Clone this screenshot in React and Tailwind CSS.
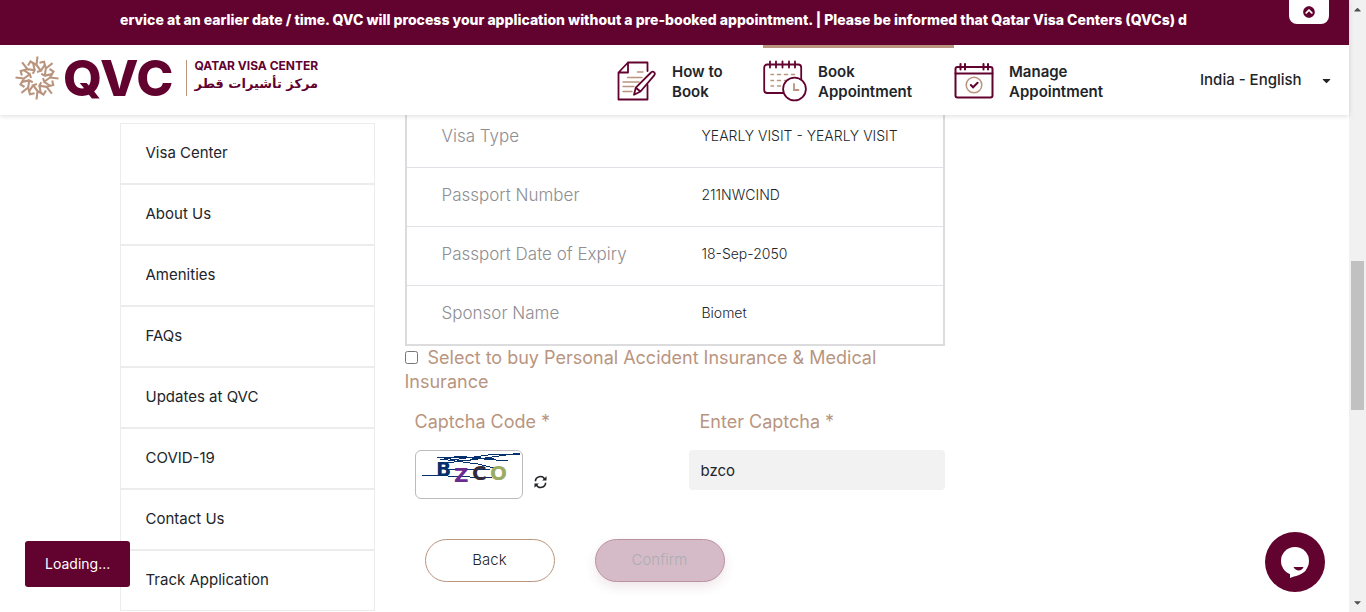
import React from "react";
import { FaChevronCircleUp, FaCaretDown, FaCaretUp } from "react-icons/fa";

const sideLinks = ["Visa Center", "About Us", "Amenities", "FAQs", "Updates at QVC", "COVID-19", "Contact Us", "Track Application"];

const details = [
  ["Visa Type", "YEARLY VISIT - YEARLY VISIT"],
  ["Passport Number", "211NWCIND"],
  ["Passport Date of Expiry", "18-Sep-2050"],
  ["Sponsor Name", "Biomet"],
];

const petals = [0, 45, 90, 135, 180, 225, 270, 315];

function Emblem() {
  return (
    <svg width="44" height="44" viewBox="-22 -22 44 44" fill="none" stroke="#b9957f" strokeWidth="2.1" aria-hidden="true">
      {petals.map((a) => (
        <path key={a} transform={`rotate(${a})`} d="M0.5-21.5L-0.5-13L3.800-7.200L0-6M-0.5-13L-6.500-16.500L-9-12.500M3.800-7.200L8-13.500" />
      ))}
    </svg>
  );
}

function FormIcon() {
  return (
    <svg width="40" height="40" viewBox="0 0 40 40" fill="none" stroke="#62022f" strokeWidth="1.8" strokeLinejoin="round" strokeLinecap="round" aria-hidden="true">
      <path d="M30.5 10V1.500H11L1.500 11.500V38.5H30.5V24M11 1.500V11.500H1.5" />
      <path stroke="#b9957f" strokeWidth="1.400" d="M20.500 11H26M10.500 16.500H25M6 21H22M6 25.500H17M6 30.500H15" />
      <path fill="#fff" d="M34 11.500c2-2.200 5 .4 3.200 2.800L23.500 30.500l-6.500 3.200 1.800-7zM18.800 26.700l4.700 3.800" />
    </svg>
  );
}

function CalendarClockIcon() {
  return (
    <svg width="44" height="42" viewBox="0 0 44 42" fill="none" stroke="#62022f" strokeWidth="1.8" strokeLinecap="round" aria-hidden="true">
      <rect x="1.200" y="4.500" width="37" height="28.500" rx="3" />
      <path d="M7 1.500v6M13 1.500v6M19.500 1.500v6M26 1.500v6M32 1.500v6" />
      <path stroke="#b9957f" strokeWidth="1.500" d="M8 14.500h2.500M14.500 14.500h3M21.500 14.500h3M28.500 14.500h3M8 20.500h2.500M14.500 20.500h3M21.500 20.500h2M8 26h2.500M14.500 26h3" />
      <circle cx="31.500" cy="29" r="11.400" fill="#fff" />
      <path stroke="#b9957f" d="M31 24v6h4.500" />
    </svg>
  );
}

function CalendarCheckIcon() {
  return (
    <svg width="40" height="38" viewBox="0 0 40 38" fill="none" stroke="#62022f" strokeWidth="2" strokeLinecap="round" aria-hidden="true">
      <rect x="1.500" y="5" width="37" height="30.500" rx="2" />
      <path d="M1.500 11.500H38.500M6.500 2v5.500M11 2v5.500M29.500 2v5.500M34 2v5.500" />
      <circle cx="20" cy="23" r="7.800" stroke="#b9957f" strokeWidth="1.500" />
      <path d="M16.800 23l2.300 2.300 4.500-4.500" />
    </svg>
  );
}

function NavLink({ icon, first, second, active, width }) {
  return (
    <a href="#" className={`flex h-[70px] items-center border-t-[3px] text-[15px] leading-5 font-semibold text-[#212529] ${width} ${active ? "border-[#b9957f]" : "border-transparent"}`}>
      <span className="flex w-[55px] shrink-0 pb-px">{icon}</span>
      <span>{first}<br />{second}</span>
    </a>
  );
}

function Captcha() {
  return (
    <svg width="106" height="47" viewBox="0 0 106 47" role="img" aria-label="Captcha image">
      <g fill="none" stroke="#06306b" strokeWidth="1" shapeRendering="crispEdges">
        <path d="M6 24L32 25L76 27M21 6L48 10L104 2M21 6L56 7L92 10M24 8L62 13L82 18M36 9L72 4L104 3M38 5L78 8M32 18H74M30 12L62 8" />
      </g>
      <g fontFamily="'DejaVu Sans', sans-serif" fontWeight="700" fontSize="20">
        <text x="20" y="25" fill="#06306b">B</text>
        <text x="38" y="31" fill="#6a2c91">Z</text>
        <text x="56" y="29" fill="#33293b">C</text>
        <text x="74" y="29" fill="#9cab63">O</text>
      </g>
    </svg>
  );
}

export default function App() {
  return (
    <div className="flex min-h-screen bg-white font-['Inter','Liberation_Sans',sans-serif] text-[#212529]">
      <div className="relative min-w-0 flex-1">
        <header className="relative z-10 bg-white shadow-[0_1px_5px_rgba(0,0,0,0.14)]">
          <div className="relative flex h-[45px] justify-center bg-[#62022f] px-[120px]">
            <p className="flex-1 overflow-hidden text-[14px] leading-10 font-extrabold whitespace-nowrap text-white">
              ervice at an earlier date / time. QVC will process your application without a pre-booked appointment. | Please be informed that Qatar Visa Centers (QVCs) d
            </p>
            <button type="button" aria-label="Collapse notice" className="absolute top-0 right-5 flex h-6 w-10 items-center justify-center rounded-b-lg bg-white text-[12px] text-[#62022f]">
              <FaChevronCircleUp />
            </button>
          </div>
          <div className="flex h-[70px] justify-between pr-4 pl-[15px]">
            <a href="#" className="flex items-center text-[#62022f]">
              <span className="flex pb-1"><Emblem /></span>
              <span className="pb-1 pl-1 text-[50px] leading-none font-extrabold">QVC</span>
              <span className="mb-1 ml-3 h-9 border-l border-[#b9957f]" />
              <span className="flex flex-col pb-2 pl-2 font-bold">
                <span className="text-[12px] leading-4">QATAR VISA CENTER</span>
                <span dir="rtl" lang="ar" className="font-['DejaVu_Sans',sans-serif] text-[13px] leading-5">مركز تأشيرات قطر</span>
              </span>
            </a>
            <div className="flex">
              <nav className="flex">
                <NavLink icon={<FormIcon />} first="How to" second="Book" width="w-[146px]" />
                <NavLink icon={<CalendarClockIcon />} first="Book" second="Appointment" active width="w-[191px]" />
                <NavLink icon={<CalendarCheckIcon />} first="Manage" second="Appointment" width="w-[246px]" />
              </nav>
              <button type="button" className="flex w-[133px] items-center justify-between text-[15px] font-medium">
                India - English <FaCaretDown className="text-[13px]" />
              </button>
            </div>
          </div>
        </header>

        <div className="mx-auto grid max-w-[1140px] grid-cols-4 gap-[30px] px-[15px]">
          <nav className="pt-2">
            {sideLinks.map((label) => (
              <a key={label} href="#" className="flex h-[61px] items-center border border-[#ececec] px-[25px] text-[15px]">{label}</a>
            ))}
          </nav>
          <main className="col-span-2 -mt-2">
            <div className="border-2 border-t border-[#dcdcde]">
              <table className="w-full border-collapse text-left">
                <tbody>
                  {details.map(([name, value]) => (
                    <tr key={name} className="h-[59px] border-t border-[#dee2e6] first:border-t-0">
                      <th scope="row" className="w-[295px] pb-0.5 pl-[35px] text-[17px] font-light text-[#8e8e93]">{name}</th>
                      <td className="pb-1 text-[14px] font-light">{value}</td>
                    </tr>
                  ))}
                </tbody>
              </table>
            </div>
            <label className="block text-[18px] leading-6 text-[#b9957f]">
              <input type="checkbox" className="mr-[10px] h-[13px] w-[13px]" />
              Select to buy Personal Accident Insurance &amp; Medical Insurance
            </label>
            <div className="grid grid-cols-[284px_1fr] pt-4">
              <div className="pl-[10px]">
                <h2 className="text-[18px] leading-6 text-[#b9957f]">Captcha Code *</h2>
                <div className="mt-4 flex items-end gap-[11px]">
                  <div className="rounded-md border border-[#bdb9bd]"><Captcha /></div>
                  <button type="button" aria-label="Refresh captcha" className="pb-[10px]">
                    <svg width="13" height="14" viewBox="0 0 14 14" fill="none" stroke="#212529" strokeWidth="1.700" aria-hidden="true">
                      <path d="M1.500 6.200A5.300 5.300 0 0 1 11.500 4M12.500 7.800A5.300 5.300 0 0 1 2.500 10" />
                      <path d="M13.500.8V5.500H8.800zM.5 13.200V8.500H5.200z" fill="#212529" stroke="none" />
                    </svg>
                  </button>
                </div>
              </div>
              <div>
                <label htmlFor="captcha" className="block pl-[11px] text-[18px] leading-6 text-[#b9957f]">Enter Captcha *</label>
                <input id="captcha" type="text" defaultValue="bzco" className="mt-4 h-10 w-full rounded bg-[#f2f2f2] px-3 text-[15px]" />
              </div>
            </div>
            <div className="flex gap-10 pt-10 pl-5 text-[15px] font-light">
              <button type="button" className="h-[43px] w-[130px] rounded-full border border-[#b9957f]">Back</button>
              <button type="button" disabled className="h-[43px] w-[130px] rounded-full border border-[#bd929f] bg-[#d5bbc8] text-[#adadb0] shadow-[0_5px_12px_rgba(98,2,47,0.1)]">Confirm</button>
            </div>
          </main>
        </div>

        <div role="status" className="absolute bottom-[25px] left-[25px] rounded-[3px] bg-[#62022f] px-5 py-3 text-[14px] leading-[22px] text-white">Loading...</div>
        <button type="button" aria-label="Open chat" className="absolute right-6 bottom-5 h-[60px] w-[60px] rounded-full bg-[#62022f]">
          <svg width="60" height="60" viewBox="0 0 60 60" aria-hidden="true">
            <circle cx="30" cy="29" r="14" fill="#fff" />
            <path fill="#fff" d="M25 40v6c5-2 12-3 16-8z" />
            <path fill="#62022f" d="M28.500 35h10c-1.500 4.500-8 4.500-10 0z" />
          </svg>
        </button>
      </div>
      <div aria-hidden="true" className="flex w-[17px] flex-col items-center justify-between bg-[#f1f1f1] text-[11px] text-[#505050]">
        <FaCaretUp className="mt-1" />
        <span className="mt-[58px] h-[149px] w-[13px] bg-[#c1c1c1]" />
        <FaCaretDown className="mb-1" />
      </div>
    </div>
  );
}
